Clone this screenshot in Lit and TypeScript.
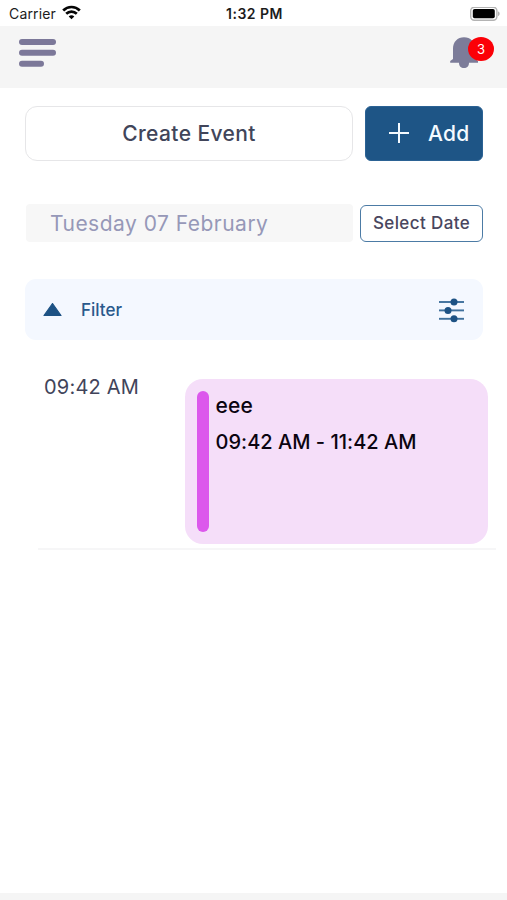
import { LitElement, html, css, svg } from "lit";
import { customElement } from "lit/decorators.js";

@customElement("status-bar")
class StatusBar extends LitElement {
  static styles = css`
    :host { display: grid; grid-template-columns: 1fr auto 1fr; align-items: center; height: 26px; padding: 0 7px 0 9px; box-sizing: border-box; background: #fff; color: #1c1c1c; font: 400 14px/26px Inter, sans-serif; }
    .carrier { display: flex; align-items: center; gap: 6px; }
    .name { letter-spacing: 0.15px; padding-top: 1px; }
    .time { font-weight: 600; font-size: 14px; letter-spacing: 0.5px; padding-top: 1px; }
    .battery { justify-self: end; display: block; }
    svg { display: block; }
    .wifi { margin-top: -2px; }
  `;
  render() {
    return html`
      <div class="carrier"><span class="name">Carrier</span>
        <svg class="wifi" width="19" height="15" viewBox="0 0 19 15" fill="none" stroke="#050505" stroke-width="2.7">
          <path d="M1.2 5.5C5.8.8 13.2.8 17.8 5.5"/><path d="M4.2 8.7C7.2 5.8 11.8 5.8 14.8 8.7"/>
          <path d="M6.7 11.4C8.4 9.8 10.6 9.8 12.3 11.4L9.5 14.3Z" fill="#050505" stroke="none"/>
        </svg>
      </div>
      <div class="time">1:32 PM</div>
      <svg class="battery" width="30" height="14" viewBox="0 0 30 14">
        <rect x=".7" y=".2" width="26.2" height="13" rx="3.6" fill="#fff" stroke="#b3b3b3" stroke-width="1.4"/>
        <rect x="2.8" y="2" width="22" height="9.3" rx="1.8" fill="#000"/>
        <path d="M28 4.5C30.2 5 30.2 8.4 28 8.9Z" fill="#b3b3b3"/>
      </svg>`;
  }
}

@customElement("app-header")
class AppHeader extends LitElement {
  static styles = css`
    :host { display: flex; justify-content: space-between; align-items: flex-start; box-sizing: border-box; height: 62px; padding: 11px 13px 0 19px; background: #f5f5f5; }
    svg { display: block; }
    .menu { margin-top: 2px; }
    .alerts { position: relative; width: 44px; height: 32px; }
    .badge { position: absolute; right: 0; top: 0; width: 26px; height: 24px; border-radius: 50%; background: #fb0007; color: #fff; font: 400 13px/25px Inter, sans-serif; text-align: center; }
  `;
  render() {
    return html`
      <svg class="menu" width="37" height="29" viewBox="0 0 37 29" fill="#7c7899">
        <rect width="37" height="6" rx="3"/><rect y="10.8" width="37" height="6" rx="3"/><rect y="21.7" width="25" height="6" rx="3"/>
      </svg>
      <div class="alerts">
        <svg width="28" height="32" viewBox="0 0 28 32" fill="#7c7c99">
          <path d="M14 .2C20.5.2 25 5 25 11.5V22L28 24V25.7H19C19 29 17 31 14 31S9 29 9 25.7H.2V24L3 22V11.5C3 5 7.5.2 14 .2Z"/>
        </svg>
        <div class="badge">3</div>
      </div>`;
  }
}

const knob = (x: number, y: number) => svg`<path d="M0 ${y}H25" stroke="#3f709c" stroke-width="1.9"/><circle cx=${x} cy=${y} r="3.5" fill="#1d5284"/>`;

@customElement("event-card")
class EventCard extends LitElement {
  static styles = css`
    :host { display: flex; gap: 6.5px; box-sizing: border-box; width: 303px; height: 165px; padding: 12px; border-radius: 18px; background: #f5def9; color: #0b0410; font: 500 20px/36px Inter, sans-serif; }
    .stripe { width: 12px; height: 141px; border-radius: 6px; background: #dc58ec; flex: none; }
    .text { margin-top: -3px; white-space: nowrap; }
    .title { font-size: 21px; letter-spacing: 0.2px; }
    .span { letter-spacing: 0.02px; }
  `;
  render() {
    return html`<div class="stripe"></div>
      <div class="text"><div class="title">eee</div><div class="span">09:42 AM - 11:42 AM</div></div>`;
  }
}

@customElement("app-root")
class AppRoot extends LitElement {
  static styles = css`
    :host { display: flex; flex-direction: column; height: 900px; overflow: hidden; background: #fff; font-family: Inter, sans-serif; white-space: nowrap; }
    svg { display: block; }
    main { flex: 1; display: flex; flex-direction: column; padding: 18px 24px 0 25px; }
    .row { display: flex; justify-content: space-between; }
    .create, .add, .select { box-sizing: border-box; margin: 0; padding: 0; font-family: inherit; font-weight: 500; }
    .create { width: 328px; height: 55px; border: 1.5px solid #e6e6e8; border-radius: 12px; background: #fff; color: #41455a; font-size: 21px; letter-spacing: 0.4px; }
    .add { display: flex; align-items: center; gap: 19px; width: 118px; height: 55px; padding-left: 23px; padding-bottom: 1px; border: 1px solid #2b6294; border-radius: 6px; background: #1e5586; color: #f4faff; font-size: 21px; letter-spacing: 0.3px; }
    .dates { margin-top: 43px; }
    .date { box-sizing: border-box; width: 327px; height: 38px; margin-left: 1px; padding-left: 24px; border-radius: 4px; background: #f7f7f7; color: #9698b8; font-size: 21px; line-height: 39px; letter-spacing: 0.48px; }
    .select { width: 123px; height: 37px; margin-top: 1px; padding-bottom: 2px; border: 1.5px solid #4c7ba5; border-radius: 6px; background: #fff; color: #49465e; font-size: 17px; letter-spacing: 0.38px; }
    .filter { display: flex; align-items: center; box-sizing: border-box; height: 61px; margin-top: 37px; padding: 1px 19px 0 18px; border-radius: 11px; background: #f4f8ff; color: #29598c; font-size: 17px; font-weight: 500; }
    .label { flex: 1; margin-left: 19px; }
    .slot { display: flex; justify-content: space-between; box-sizing: border-box; width: 458px; height: 210px; margin: 0 0 0 13px; padding: 38.5px 8px 0 6px; border-bottom: 2px solid #f6f6f7; }
    .time { margin-top: -1px; font-size: 20px; line-height: 18px; letter-spacing: 0.2px; font-weight: 400; color: #41445a; }
    footer { height: 7px; background: #f5f5f5; }
  `;
  render() {
    return html`
      <status-bar></status-bar>
      <app-header></app-header>
      <main>
        <div class="row">
          <button class="create">Create Event</button>
          <button class="add">
            <svg width="20" height="20" viewBox="0 0 20 20" stroke="#f4faff" stroke-width="2"><path d="M0 10H20M10 0V20"/></svg>
            <span>Add</span>
          </button>
        </div>
        <div class="row dates">
          <div class="date">Tuesday 07 February</div>
          <button class="select">Select Date</button>
        </div>
        <div class="filter">
          <svg width="19" height="14" viewBox="0 0 19 14"><path d="M9.5 .5L18 12.5H1Z" fill="#1d5284" stroke="#1d5284" stroke-width="1.2" stroke-linejoin="round"/></svg>
          <span class="label">Filter</span>
          <svg width="25" height="25" viewBox="0 0 25 25">${knob(15, 4)}${knob(9, 12.4)}${knob(15, 20.8)}</svg>
        </div>
        <div class="slot">
          <div class="time">09:42 AM</div>
          <event-card></event-card>
        </div>
      </main>
      <footer></footer>`;
  }
}
